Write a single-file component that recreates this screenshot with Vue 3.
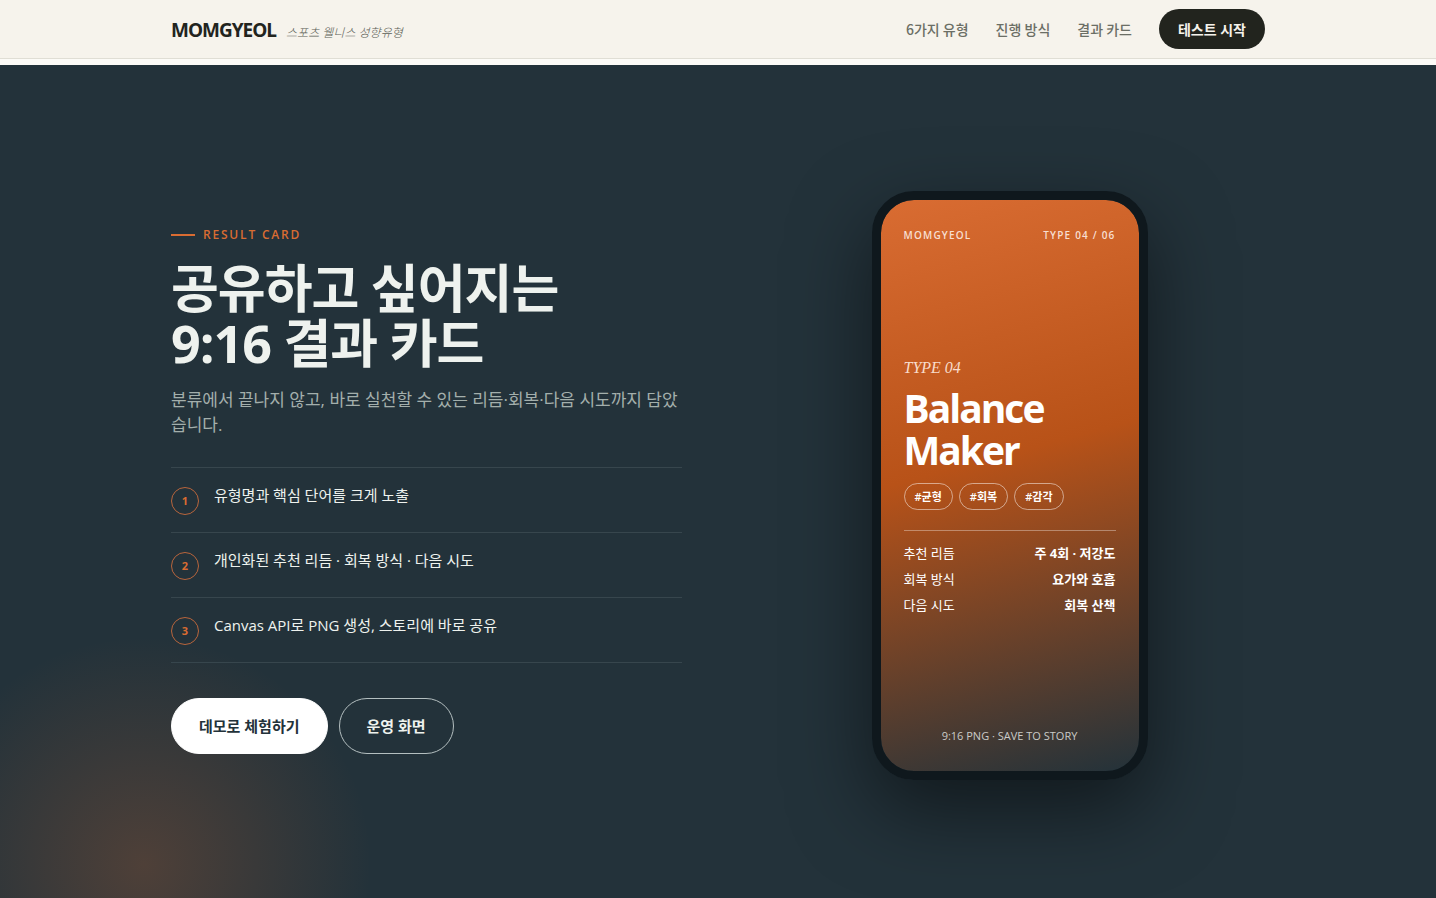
<script setup>
const navLinks = ['6가지 유형', '진행 방식', '결과 카드']
const points = [
  '유형명과 핵심 단어를 크게 노출',
  '개인화된 추천 리듬 · 회복 방식 · 다음 시도',
  'Canvas API로 PNG 생성, 스토리에 바로 공유',
]
const tags = ['#균형', '#회복', '#감각']
const details = [
  { label: '추천 리듬', value: '주 4회 · 저강도' },
  { label: '회복 방식', value: '요가와 호흡' },
  { label: '다음 시도', value: '회복 산책' },
]
</script>

<template>
  <div class="page">
    <header class="header">
      <div class="wrap bar">
        <a class="brand" href="#">
          <span class="brand-name">MOMGYEOL</span>
          <span class="brand-sub">스포츠 웰니스 성향유형</span>
        </a>
        <nav class="nav">
          <a v-for="link in navLinks" :key="link" class="nav-link" href="#">{{ link }}</a>
          <button class="start" type="button">테스트 시작</button>
        </nav>
      </div>
    </header>

    <main class="section">
      <div class="wrap columns">
        <div class="copy">
          <p class="eyebrow">RESULT CARD</p>
          <h1 class="title">공유하고 싶어지는<br />9:16 결과 카드</h1>
          <p class="lead">분류에서 끝나지 않고, 바로 실천할 수 있는 리듬·회복·다음 시도까지 담았습니다.</p>
          <ol class="points">
            <li v-for="(point, i) in points" :key="point" class="point">
              <span class="num">{{ i + 1 }}</span>
              <span class="point-text">{{ point }}</span>
            </li>
          </ol>
          <div class="actions">
            <button class="btn primary" type="button">데모로 체험하기</button>
            <button class="btn outline" type="button">운영 화면</button>
          </div>
        </div>

        <article class="phone">
          <div class="phone-top">
            <span>MOMGYEOL</span>
            <span>TYPE 04 / 06</span>
          </div>
          <div class="phone-body">
            <p class="type-no">TYPE 04</p>
            <h2 class="type-name">Balance<br />Maker</h2>
            <ul class="tags">
              <li v-for="tag in tags" :key="tag" class="tag">{{ tag }}</li>
            </ul>
            <dl class="details">
              <div v-for="row in details" :key="row.label" class="detail">
                <dt>{{ row.label }}</dt>
                <dd>{{ row.value }}</dd>
              </div>
            </dl>
          </div>
          <p class="phone-foot">9:16 PNG · SAVE TO STORY</p>
        </article>
      </div>
    </main>
  </div>
</template>

<style>
body {
  margin: 0;
  background: #fcfbf7;
}
</style>

<style scoped>
.page {
  display: flex;
  flex-direction: column;
  gap: 6px;
  min-height: 100vh;
  font-family: "Open Sans", "Noto Sans CJK KR", sans-serif;
  color: #eef2ee;
}
.page *,
.page *::before {
  box-sizing: border-box;
}
p, h1, h2, ol, ul, dl, dd {
  margin: 0;
  padding: 0;
}
ol, ul {
  list-style: none;
}
button {
  font-family: inherit;
  cursor: pointer;
}
.wrap {
  width: 100%;
  max-width: 1180px;
  margin: 0 auto;
  padding: 0 43px;
  box-sizing: border-box;
}
.header {
  background: #f6f3ec;
  border-bottom: 1px solid #e0ded5;
}
.bar {
  display: flex;
  align-items: center;
  justify-content: space-between;
  height: 58px;
}
.brand {
  display: flex;
  align-items: baseline;
  gap: 10px;
  padding-top: 2px;
  text-decoration: none;
}
.brand-name {
  font-size: 19px;
  font-weight: 700;
  letter-spacing: -1px;
  color: #22241e;
}
.brand-sub {
  font-size: 12px;
  font-weight: 300;
  font-style: italic;
  color: #5b5e56;
}
.nav {
  display: flex;
  align-items: center;
  gap: 27px;
}
.nav-link {
  font-family: "Noto Sans CJK KR", sans-serif;
  font-size: 14px;
  line-height: 20px;
  font-weight: 500;
  color: #6b6e65;
  text-decoration: none;
}
.start {
  height: 40px;
  padding: 0 19px;
  border: 0;
  border-radius: 20px;
  background: #22241e;
  color: #f6f3ec;
  font-size: 14px;
  font-weight: 700;
}
.section {
  flex: 1;
  padding: 126px 0 118px;
  box-sizing: border-box;
  background:
    radial-gradient(circle 228px at 10% 96%, rgba(217, 108, 50, 0.24), rgba(217, 108, 50, 0)),
    #23323a;
}
.columns {
  display: grid;
  grid-template-columns: 1fr 1fr;
  gap: 72px;
  align-items: center;
}
.copy {
  padding-top: 8px;
}
.eyebrow {
  display: flex;
  align-items: center;
  gap: 8px;
  font-size: 12px;
  line-height: 18px;
  font-weight: 600;
  letter-spacing: 1.8px;
  color: #d96c32;
}
.eyebrow::before {
  content: "";
  width: 24px;
  height: 2px;
  background: #d96c32;
}
.title {
  margin-top: 16px;
  font-size: 52px;
  line-height: 55px;
  font-weight: 700;
  letter-spacing: -1px;
}
.lead {
  margin-top: 17px;
  font-size: 17px;
  line-height: 25px;
  color: #a3afac;
}
.points {
  margin-top: 30px;
  border-top: 1px solid #37464d;
}
.point {
  display: flex;
  align-items: flex-start;
  gap: 15px;
  padding: 19px 0 17px;
  border-bottom: 1px solid #37464d;
}
.num {
  flex: none;
  display: grid;
  place-items: center;
  width: 28px;
  height: 28px;
  border: 1px solid #b9653c;
  border-radius: 50%;
  font-size: 11px;
  font-weight: 700;
  color: #d96c32;
}
.point-text {
  font-size: 15px;
  line-height: 16px;
}
.actions {
  display: flex;
  gap: 11px;
  margin-top: 35px;
}
.btn {
  height: 56px;
  padding: 0 27px;
  border-radius: 28px;
  font-size: 15px;
  font-weight: 600;
}
.primary {
  border: 1px solid #fff;
  background: #fff;
  color: #23323a;
}
.outline {
  border: 1px solid #b4bfc0;
  background: transparent;
  color: #eef2ee;
}
.phone {
  justify-self: center;
  display: flex;
  flex-direction: column;
  justify-content: space-between;
  width: 276px;
  aspect-ratio: 276 / 589;
  padding: 26px 23px;
  border: 9px solid #0f181d;
  border-radius: 42px;
  background: linear-gradient(165deg, #d96c32 0%, #b85218 45%, #23323a 100%) padding-box;
  box-shadow: 0 30px 80px rgba(0, 0, 0, 0.5);
  color: #fff;
}
.phone-top {
  display: flex;
  justify-content: space-between;
  font-size: 10px;
  line-height: 18px;
  font-weight: 600;
  letter-spacing: 1.2px;
  color: #f8dfd1;
}
.phone-body {
  padding-top: 4px;
}
.type-no {
  font-family: "Liberation Serif", serif;
  font-size: 16px;
  line-height: 20px;
  font-style: italic;
  color: #f8dccb;
}
.type-name {
  margin-top: 9px;
  font-size: 39px;
  line-height: 42px;
  font-weight: 700;
  letter-spacing: -2px;
}
.tags {
  display: flex;
  gap: 6px;
  margin-top: 12px;
}
.tag {
  padding: 0 10px;
  border: 1px solid rgba(255, 255, 255, 0.5);
  border-radius: 14px;
  font-size: 11px;
  line-height: 25px;
  font-weight: 600;
}
.details {
  margin-top: 20px;
  padding-top: 9px;
  border-top: 1px solid rgba(255, 255, 255, 0.35);
}
.detail {
  display: flex;
  justify-content: space-between;
  font-size: 13px;
  line-height: 26px;
}
.detail dd {
  font-weight: 700;
}
.phone-foot {
  font-size: 11px;
  line-height: 18px;
  text-align: center;
  color: #cbcbc8;
}
</style>
